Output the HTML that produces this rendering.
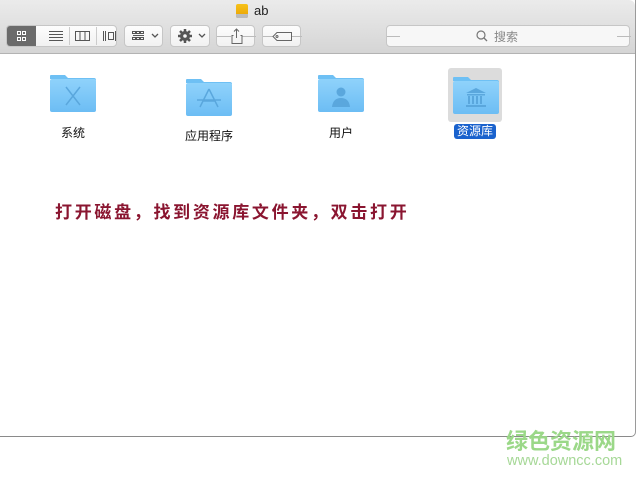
<!DOCTYPE html>
<html><head><meta charset="utf-8"><style>
*{margin:0;padding:0;box-sizing:border-box}
body{width:640px;height:480px;background:#fff;position:relative;overflow:hidden;font-family:"Liberation Sans","Noto Sans CJK SC",sans-serif}
.win{position:absolute;left:0;top:0;width:636px;height:437px;border-right:1px solid #9a9a9a;border-bottom:1px solid #8a8a8a;border-radius:0 0 5px 0;background:#fff;overflow:hidden}
.tb{position:absolute;left:0;top:0;width:100%;height:54px;background:linear-gradient(#ebebeb,#d5d5d5);border-bottom:1px solid #b3b3b3;border-radius:0 6px 0 0}
.btn{position:absolute;top:25px;height:22px;background:linear-gradient(#fdfdfd,#f1f1f1);border:1px solid #c6c6c6;border-radius:4px}
.abs{position:absolute}
.lbl{position:absolute;font-size:12px;color:#111;transform:translateX(-50%);white-space:nowrap}
.msg{position:absolute;left:55px;top:198px;font-size:17px;font-weight:bold;color:#8a1530;white-space:nowrap;font-family:"Noto Sans CJK SC",sans-serif}
.msg span{display:inline-block;width:19.7px}
</style></head><body>
<div class="win">
<div class="tb">
 <div class="abs" style="left:236px;top:4px;width:12px;height:14px;background:linear-gradient(#f7c21a,#e9a000);border-radius:2px"></div>
 <div class="abs" style="left:236px;top:14px;width:12px;height:4px;background:#bbb;border-radius:0 0 2px 2px"></div>
 <div class="abs" style="left:254px;top:3px;font-size:13px;color:#222">ab</div>
 <div class="btn" style="left:6px;width:111px;overflow:hidden">
  <div class="abs" style="left:0;top:0;width:29px;height:20px;background:#6b6b6b"></div>
  <svg class="abs" style="left:0;top:0" width="111" height="20" fill="none" stroke-width="1">
   <g stroke="#fff"><rect x="10.5" y="5.5" width="3" height="3"/><rect x="15.5" y="5.5" width="3" height="3"/><rect x="10.5" y="11.5" width="3" height="3"/><rect x="15.5" y="11.5" width="3" height="3"/></g>
   <g stroke="#555"><path d="M42 5.5h14M42 8.5h14M42 11.5h14M42 14.5h14"/><rect x="68.5" y="5.5" width="14" height="9"/><path d="M73 5.5v9M78 5.5v9"/><path d="M62.5 1v18M89.5 1v18" stroke="#ccc"/>
   <path d="M96.5 5v10M98.5 5v10M110.5 5v10M108.5 5v10"/><rect x="101.5" y="6.5" width="5" height="7"/></g>
  </svg>
 </div>
 <div class="btn" style="left:124px;width:39px"><svg width="39" height="20" fill="none" stroke="#555"><rect x="7.5" y="5.5" width="3" height="2"/><rect x="11.5" y="5.5" width="3" height="2"/><rect x="15.5" y="5.5" width="3" height="2"/><rect x="7.5" y="11.5" width="3" height="2"/><rect x="11.5" y="11.5" width="3" height="2"/><rect x="15.5" y="11.5" width="3" height="2"/><path d="M8 9.5h11"/><path d="M27 8l3 3 3-3" stroke-width="1.3"/></svg></div>
 <div class="btn" style="left:170px;width:40px"><svg width="40" height="20"><circle cx="14" cy="10" r="5" fill="#555"/><g stroke="#555" stroke-width="2.5"><path d="M14 3v14M7 10h14M9 5l10 10M19 5L9 15"/></g><circle cx="14" cy="10" r="1.8" fill="#f5f5f5"/><path d="M28 8l3 3 3-3" fill="none" stroke="#555" stroke-width="1.3"/></svg></div>
 <div class="btn" style="left:216px;width:39px"><svg width="39" height="20" fill="none" stroke="#666"><path d="M0 10.5h14M25 10.5h14" stroke="#bbb"/><path d="M16.5 9.5h-1.5v8h10v-8h-1.5"/><path d="M19.5 3v9M17 5.5l2.5-2.5 2.5 2.5"/></svg></div>
 <div class="btn" style="left:262px;width:39px"><svg width="39" height="20" fill="none" stroke="#666"><path d="M0 10.5h10M29 10.5h10" stroke="#bbb"/><path d="M14 6.5h14.5v8H14l-4-4z"/><circle cx="14" cy="10.5" r="1"/></svg></div>
 <div class="btn" style="left:386px;width:244px;background:#f7f7f7"><svg class="abs" style="left:0;top:0" width="244" height="20" fill="none"><path d="M0 10.5h13M230 10.5h14" stroke="#bbb"/><circle cx="94" cy="9" r="4" stroke="#777" stroke-width="1.2"/><path d="M97 12l3 3" stroke="#777" stroke-width="1.3"/></svg><span class="abs" style="left:107px;top:2px;font-size:12px;color:#888">搜索</span></div>
</div>
<svg class="abs" style="left:0;top:0" width="636" height="160">
 <defs><linearGradient id="fg" x1="0" y1="0" x2="0" y2="1"><stop offset="0" stop-color="#8fd2fb"/><stop offset="1" stop-color="#6cbdf4"/></linearGradient></defs>
 <rect x="448" y="68" width="54" height="54" rx="3" fill="#dcdcdc"/>
 <g id="f">
 <path d="M50 79v-3a1 1 0 0 1 1-1h14l3 3h26a2 2 0 0 1 2 2z" fill="#6ec0f4"/>
 <rect x="50" y="79" width="46" height="33" rx="2" fill="url(#fg)"/>
 </g>
 <use href="#f" transform="translate(136,4)"/>
 <use href="#f" transform="translate(268,0)"/>
 <use href="#f" transform="translate(403,2)"/>
 <g stroke="#5aa7dd" stroke-width="1.5" fill="none"><path d="M66 87l14 18M80 87l-14 18"/>
 <path d="M209 89l-9 18M209 89l9 18M203 101h12M197 100h24" /></g>
 <circle cx="341" cy="92" r="4.5" fill="#5aa7dd"/><path d="M332 107q1-9 9-9q8 0 9 9z" fill="#5aa7dd"/>
 <g fill="#5aa7dd"><path d="M466 93l10-5 10 5z"/><rect x="467" y="94" width="18" height="1.5"/><rect x="468" y="96" width="2" height="8"/><rect x="472" y="96" width="2" height="8"/><rect x="476" y="96" width="2" height="8"/><rect x="480" y="96" width="2" height="8"/><rect x="466" y="105" width="20" height="2"/></g>
</svg>
<div class="lbl" style="left:73px;top:124px">系统</div>
<div class="lbl" style="left:209px;top:127px">应用程序</div>
<div class="lbl" style="left:341px;top:124px">用户</div>
<div class="lbl" style="left:475px;top:124px;background:#1a62cd;color:#fff;padding:0 3px;border-radius:3px;line-height:15px">资源库</div>
<div class="msg"><span>打</span><span>开</span><span>磁</span><span>盘</span><span>，</span><span>找</span><span>到</span><span>资</span><span>源</span><span>库</span><span>文</span><span>件</span><span>夹</span><span>，</span><span>双</span><span>击</span><span>打</span><span>开</span></div>
</div>
<div class="abs" style="left:506px;top:425px;font-size:22px;font-weight:bold;color:#9bd888;font-family:'Noto Sans CJK SC',sans-serif;line-height:30px">绿色资源网</div>
<div class="abs" style="left:507px;top:453px;font-size:14.5px;color:#a6d897">www.downcc.com</div>
</body></html>
